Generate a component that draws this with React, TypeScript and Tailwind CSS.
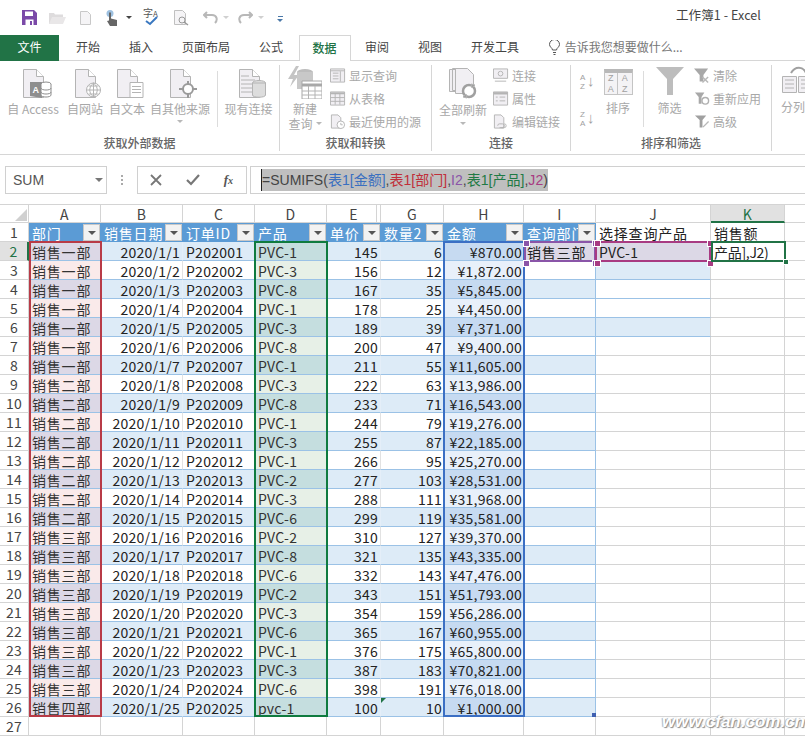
import React from "react";

const G = "#b4b4b4";
const L = "#f1eff3";

function Doc({ children }: { children?: React.ReactNode }) {
  return (
    <svg width={38} height={32} viewBox="0 0 38 32" className="overflow-visible">
      <g transform="translate(8 0)">
        <path d="M1.500 1.500h13l7 7v21h-20z" fill={L} stroke={G} />
        <path d="M14.500 1.500v7h7" fill="#fff" stroke={G} />
      </g>
      {children}
    </svg>
  );
}

function BigBtn({ w, label, icon, caret }: { w: number; label: React.ReactNode; icon: React.ReactNode; caret?: boolean }) {
  return (
    <div className="flex flex-col items-center shrink-0" style={{ width: w }}>
      <div className="h-[34px] flex items-end justify-center">{icon}</div>
      <div className="mt-[1px] text-[12px] leading-[16px] text-[#a8a8a8] whitespace-nowrap text-center">{label}</div>
      {caret && <div className="mt-[3px] w-0 h-0 border-x-[3px] border-x-transparent border-t-[3px] border-t-[#b8b8b8]" />}
    </div>
  );
}

function SmallBtn({ icon, label }: { icon: React.ReactNode; label: string }) {
  return (
    <div className="h-[23px] flex items-center gap-[3px] whitespace-nowrap text-[12px] text-[#a8a8a8]">
      <span className="w-[16px] h-[16px] flex items-center justify-center shrink-0">{icon}</span>
      {label}
    </div>
  );
}

function Group({ w, title, children }: { w: number; title?: string; children: React.ReactNode }) {
  return (
    <div className="shrink-0 h-[86px] mt-[4px] border-r border-[#d6d6d6] flex flex-col" style={{ width: w }}>
      <div className="h-[72px] flex pt-[1px]">{children}</div>
      <div className="text-center text-[12px] leading-[16px] text-[#666] font-medium">{title}</div>
    </div>
  );
}

const Sep = ({ cls = "" }: { cls?: string }) => (
  <div className={`w-[9px] shrink-0 flex justify-center ${cls}`}>
    <div className="w-px h-[56px] mt-[5px] bg-[#dcdcdc]" />
  </div>
);

const SmIcon = ({ children }: { children: React.ReactNode }) => (
  <svg width="17" height="17" viewBox="0 0 17 17" fill="none" stroke={G}>{children}</svg>
);

function Caret({ c = "#b8b8b8", w = 3 }: { c?: string; w?: number }) {
  return <div className="w-0 h-0 border-x-transparent" style={{ borderLeftWidth: w, borderRightWidth: w, borderTopWidth: w, borderTopColor: c }} />;
}

function Ribbon() {
  return (
    <div className="h-[94px] flex border-b border-[#d6d6d6] overflow-hidden shrink-0">
      <Group w={280} title="获取外部数据">
        <div className="w-[3px] shrink-0" />
        <BigBtn w={60} label="自 Access" icon={
          <Doc>
            <g transform="translate(8 0)">
              <path d="M8 14h12v16l-12-2z" fill="#8e8e8e" />
              <text x="10.500" y="25" fontSize="9" fontWeight="700" fill="#fff" fontFamily="Liberation Sans">A</text>
              <ellipse cx="24" cy="16" rx="5" ry="2" fill="#fff" stroke="#8e8e8e" />
              <path d="M19 16v11c0 2.700 10 2.700 10 0v-11M19 20c0 2.700 10 2.700 10 0M19 24c0 2.700 10 2.700 10 0" fill="#fff" stroke="#8e8e8e" />
            </g>
          </Doc>} />
        <BigBtn w={44} label="自网站" icon={
          <Doc>
            <g transform="translate(1.500 0)">
              <circle cx="26" cy="22" r="7" fill="#fff" stroke={G} />
              <path d="M19 22h14M26 15v14M21 18h10M21 26h10M26 15c-5 4-5 10 0 14M26 15c5 4 5 10 0 14" stroke={G} fill="none" />
            </g>
          </Doc>} />
        <BigBtn w={40} label="自文本" icon={
          <Doc>
            <g transform="translate(8 0)">
              <path d="M14 14.500h13v15h-13z" fill="#fff" stroke={G} />
              <path d="M16 18.500h9M16 21.500h9M16 24.500h9" stroke={G} />
            </g>
          </Doc>} />
        <BigBtn w={66} label="自其他来源" caret icon={
          <Doc>
            <g transform="translate(2 0)">
              <circle cx="25" cy="21" r="5" fill="#fff" stroke="#9a9a9a" strokeWidth="2" />
              <path d="M25 13v4M25 25v5M16 21h4M30 21h4" stroke="#9a9a9a" strokeWidth="2" />
            </g>
          </Doc>} />
        <Sep />
        <BigBtn w={53} label="现有连接" icon={
          <Doc>
            <path d="M11 8h8M11 12h14M11 16h14M11 20h14M11 24h14" stroke={G} />
            <g transform="translate(4 0)">
              <ellipse cx="25" cy="15" rx="6.500" ry="2.500" fill="#ddd" stroke={G} />
              <path d="M18.500 15v12c0 3 13 3 13 0v-12z" fill="#ddd" stroke={G} />
            </g>
          </Doc>} />
      </Group>

      <Group w={152} title="获取和转换">
        <div className="w-[2px] shrink-0" />
        <div className="w-[46px] shrink-0 flex flex-col items-center">
          <svg width="34" height="33" viewBox="0 0 34 33">
            <path d="M8 0l-8 13h5l-3 8 9-12H6l5-9z" fill="#c4c4c4" />
            <ellipse cx="17" cy="6" rx="8" ry="3" fill="#bdbdbd" />
            <path d="M9 6v17h16V6z" fill="#c8c8c8" />
            <path d="M14 15h20v18H14z" fill="#fff" stroke="#a8a8a8" />
            <path d="M14 19h20" stroke="#a8a8a8" strokeWidth="3" />
            <path d="M14 25h20M14 29h20M20.500 20v13M27 20v13" stroke={G} />
          </svg>
          <div className="mt-[2px] text-[12px] leading-[15px] text-[#a8a8a8] text-center">
            新建<br /><span className="inline-flex items-center gap-[3px]">查询<Caret /></span>
          </div>
        </div>
        <div className="ml-[2px] -mt-[2px] flex flex-col">
          <SmallBtn label="显示查询" icon={<SmIcon><path d="M.5 1.500h15v14H.5z" fill={L} /><path d="M.5 3.500h15M11 4v11" /><path d="M3 6h6M3 9h6M3 12h6" /></SmIcon>} />
          <SmallBtn label="从表格" icon={<SmIcon><path d="M.5 1.500h15v14H.5z" fill={L} /><path d="M.5 3h15" strokeWidth="2" /><path d="M.5 7.500h15M.5 11.500h15M5.500 3v12M10.500 3v12" /></SmIcon>} />
          <SmallBtn label="最近使用的源" icon={<SmIcon><path d="M1.500 1.500h7l3 3v11h-10z" fill={L} /><circle cx="11.500" cy="12" r="4" fill="#fff" /><path d="M11.500 10v2h2" /></SmIcon>} />
        </div>
      </Group>

      <Group w={139} title="连接">
        <div className="w-[7px] shrink-0" />
        <div className="w-[48px] shrink-0 flex flex-col items-center pt-[1px]">
          <svg width="32" height="33" viewBox="0 0 32 33" fill="none" stroke={G}>
            <path d="M2.500 2.500h10v22h-10zM5.500 1.500h10v22h-10z" fill={L} />
            <path d="M8.500 1.500h12l6 6v19h-18z" fill={L} />
            <circle cx="22" cy="24" r="6" stroke="#a0a0a0" strokeWidth="2.500" fill="#fff" />
            <path d="M24 17l4 1-3 3zM20 31l-4-1 3-3z" fill="#a0a0a0" />
          </svg>
          <div className="mt-[2px] text-[12px] leading-[15px] text-[#a8a8a8]">全部刷新</div>
          <div className="mt-[5px]"><Caret /></div>
        </div>
        <div className="ml-[6px] -mt-[2px] flex flex-col">
          <SmallBtn label="连接" icon={<SmIcon><path d="M.5 1.500h15v10H.5z" fill={L} /><circle cx="8" cy="6.500" r="2.500" /><path d="M2 14.500h12" /></SmIcon>} />
          <SmallBtn label="属性" icon={<SmIcon><path d="M.5 1.500h15v14H.5z" fill={L} /><path d="M.5 3h15" strokeWidth="2.500" /><path d="M3 7h2M3 11h2M7 7h6M7 11h6" /></SmIcon>} />
          <SmallBtn label="编辑链接" icon={<SmIcon><path d="M1.500 1.500h7l3 3v11h-10z" fill={L} /><path d="M5 13a2 2 0 0 1 2-2h3a2 2 0 0 1 0 4h-3M9 15h3a2 2 0 0 0 0-4" /></SmIcon>} />
        </div>
      </Group>

      <Group w={201} title="排序和筛选">
        <div className="w-[9px] shrink-0" />
        <div className="w-[14px] shrink-0 flex flex-col gap-[18px] pt-[7px] text-[#a0a0a0]">
          <div className="relative h-[19px] text-[8px] leading-[9px] font-['Liberation_Sans',sans-serif]">A<br />Z<span className="absolute left-[7px] -top-[1px] text-[15px] leading-[18px]">↓</span></div>
          <div className="relative h-[19px] text-[8px] leading-[9px] font-['Liberation_Sans',sans-serif]">Z<br />A<span className="absolute left-[7px] -top-[1px] text-[15px] leading-[18px]">↓</span></div>
        </div>
        <div className="w-[48px] shrink-0 flex flex-col items-center pt-[3px]">
          <div className="w-[29px] h-[26px] border border-[#c4c4c4] border-t-[4px] border-t-[#b8b8b8] grid grid-cols-2 bg-[#f4f3f5] text-[9px] leading-[11px] text-center text-[#a0a0a0] font-['Liberation_Sans',sans-serif]">
            <div className="border-r border-[#c4c4c4]">Z<br />A</div><div>A<br />Z</div>
          </div>
          <div className="mt-[5px] text-[12px] leading-[16px] text-[#a8a8a8]">排序</div>
        </div>
        <Sep cls="-ml-[3px]" />
        <div className="w-[43px] shrink-0 flex flex-col items-center pt-[1px]">
          <svg width="28" height="28" viewBox="0 0 28 28"><path d="M0 0h28L17 12v16h-6V12z" fill="#bdbdbd" /></svg>
          <div className="mt-[5px] text-[12px] leading-[16px] text-[#a8a8a8]">筛选</div>
        </div>
        <div className="ml-[3px] -mt-[2px] flex flex-col">
          <SmallBtn label="清除" icon={<svg width="17" height="17" viewBox="0 0 17 17"><path d="M0 1h15l-5 7v7H6V8z" fill="#a8a8a8" /><path d="M9 10l6 6M15 10l-6 6" stroke="#b8b8b8" strokeWidth="1.500" /></svg>} />
          <SmallBtn label="重新应用" icon={<svg width="17" height="17" viewBox="0 0 17 17"><path d="M1 2h10l-3 5v7H5V7z" fill="#a8a8a8" /><circle cx="12" cy="11" r="3.500" fill="none" stroke="#b0b0b0" strokeWidth="1.500" /></svg>} />
          <SmallBtn label="高级" icon={<svg width="17" height="17" viewBox="0 0 17 17"><path d="M1 2h12l-4 5v8H6V7z" fill="#a0a0a0" /><path d="M9 14l6-6 1 1-6 6z" fill="#b8b8b8" /></svg>} />
        </div>
      </Group>

      <div className="shrink-0 pl-[9px] pt-[4px] h-[70px]">
        <svg width="34" height="33" viewBox="0 0 34 33" fill="none" stroke={G}>
          <path d="M1.500 11.500h14v16h-14zM17.500 11.500h14v16h-14z" fill={L} />
          <path d="M4 15h9M4 19h9M4 23h9M20 15h9M20 19h9M20 23h9" />
          <path d="M10 8c4-7 12-7 15 0" strokeWidth="2" stroke="#a0a0a0" />
        </svg>
        <div className="mt-[1px] text-[12px] leading-[16px] text-[#a8a8a8] whitespace-nowrap">分列</div>
      </div>
    </div>
  );
}

function TitleBar() {
  return (
    <div className="h-[35px] flex items-center shrink-0 relative">
      <div className="ml-[22px] flex items-center">
        <svg width="15" height="15" viewBox="0 0 15 15"><path d="M0 0h12l3 3v12H0z" fill="#7b4aa8" /><path d="M3 1.500h8v4.500H3z" fill="#fff" /><path d="M3.500 9.500h8V15h-8z" fill="#fff" /><path d="M8 11h2v4H8z" fill="#7b4aa8" /></svg>
        <svg className="ml-[12px]" width="17" height="13" viewBox="0 0 17 13"><path d="M0 2h5l1 1.500h8V13H0z" fill="#dedcdd" /><path d="M3 6h14l-3 7H0z" fill="#e9e7e8" /></svg>
        <svg className="ml-[14px]" width="11" height="14" viewBox="0 0 11 14"><path d="M.5.500h7l3 3v10H.5z" fill="#f5f4f6" stroke="#c8c8c8" /></svg>
        <svg className="ml-[15px]" width="13" height="16" viewBox="0 0 13 16"><circle cx="4" cy="3.500" r="3.500" fill="#9dc0e0" /><path d="M3 2.500h2v6l6 1.500v6H4l-3-5 2-.500z" fill="#666" /></svg>
        <div className="ml-[7px]"><Caret c="#444" /></div>
        <div className="ml-[11px] w-[16px] h-[16px] relative">
          <span className="absolute left-0 -top-[3px] text-[10px] leading-[12px] text-[#555]">字<span className="text-[8px]">A</span></span>
          <svg className="absolute left-[2px] top-[6px]" width="13" height="10" viewBox="0 0 13 10"><path d="M1 5l4 3 7-7" fill="none" stroke="#3a78c0" strokeWidth="2" /></svg>
        </div>
        <svg className="ml-[15px]" width="15" height="16" viewBox="0 0 15 16" fill="none" stroke="#c0c0c0"><path d="M.5.500h8l3 3v11H.5z" fill="#f5f4f6" /><circle cx="8" cy="10" r="3" stroke="#999" /><path d="M10 12l4 3" stroke="#999" strokeWidth="1.500" /></svg>
        <svg className="ml-[14px]" width="15" height="13" viewBox="0 0 15 13" fill="none"><path d="M4 1L1 4l3 3" stroke="#b8b8b8" strokeWidth="2" /><path d="M1 4h8c5 0 6 5 3 8" stroke="#b8b8b8" strokeWidth="2" /></svg>
        <div className="ml-[5px]"><Caret c="#d0d0d0" /></div>
        <svg className="ml-[9px]" width="15" height="13" viewBox="0 0 15 13" fill="none"><path d="M11 1l3 3-3 3" stroke="#b8b8b8" strokeWidth="2" /><path d="M14 4H6c-5 0-6 5-3 8" stroke="#b8b8b8" strokeWidth="2" /></svg>
        <div className="ml-[5px]"><Caret c="#d0d0d0" /></div>
        <div className="ml-[13px] mt-[3px] flex flex-col items-center gap-[2px]">
          <div className="w-[5px] h-px bg-[#4a78a8]" />
          <Caret c="#4a78a8" />
        </div>
      </div>
      <div className="ml-auto mr-[44px] mb-[4px] text-[12.500px] tracking-[0.1px] text-[#444] whitespace-nowrap">工作簿1 - Excel</div>
    </div>
  );
}

function Tabs() {
  const tabs = ["开始", "插入", "页面布局", "公式", "数据", "审阅", "视图", "开发工具"];
  return (
    <div className="h-[26px] flex shrink-0 border-b border-[#d6d6d6] text-[12px] text-[#444]">
      <div className="w-[59px] h-[26px] pb-[2px] bg-[#217346] text-white flex items-center justify-center">文件</div>
      <div className="w-[2.500px]" />
      {tabs.map((t) =>
        t === "数据" ? (
          <div key={t} className="h-[26px] pb-[2px] px-[13px] ml-[1px] border border-b-0 border-[#d6d6d6] bg-white text-[#217346] font-medium flex items-center">{t}</div>
        ) : (
          <div key={t} className="px-[14.500px] h-[25px] pb-[1px] flex items-center">{t}</div>
        )
      )}
      <div className="ml-[15px] h-[25px] pb-[1px] flex items-center gap-[5px] text-[#767676]">
        <svg width="11" height="15" viewBox="0 0 11 15" fill="none" stroke="#555"><path d="M3.500 10c0-2-3-3-3-5.500a5 5 0 0 1 10 0C10.500 7 7.500 8 7.500 10z" /><path d="M4 12.500h3M4.500 14.500h2" /></svg>
        告诉我您想要做什么...
      </div>
    </div>
  );
}

function FormulaBar() {
  return (
    <div className="h-[49px] shrink-0 relative pt-[11px] flex items-start">
      <div className="ml-[5px] w-[102px] h-[28px] border border-[#d0d0d0] flex items-center pl-[7px] text-[14px] text-[#555] font-['Liberation_Sans',sans-serif]">
        SUM
        <div className="ml-auto mr-[3px]"><Caret c="#777" w={4} /></div>
      </div>
      <div className="w-[30px] h-[28px] flex flex-col items-center justify-center gap-[2px]">
        {[0, 1, 2].map((i) => <div key={i} className="w-[2px] h-[2px] bg-[#aaa]" />)}
      </div>
      <div className="w-[110px] h-[28px] border border-[#d0d0d0] flex items-center justify-between pl-[12px] pr-[13px]">
        <svg width="12" height="12" viewBox="0 0 12 12"><path d="M1 1l10 10M11 1L1 11" stroke="#777" strokeWidth="1.800" /></svg>
        <svg width="14" height="12" viewBox="0 0 14 12"><path d="M1 6l4 4 8-9" fill="none" stroke="#777" strokeWidth="2.200" /></svg>
        <span className="text-[13px] italic font-bold text-[#555] font-['Liberation_Serif',serif]">f<span className="text-[10px]">x</span></span>
      </div>
      <div className="ml-[3px] flex-1 h-[28px] border border-[#d0d0d0] border-r-0 flex items-center pl-[10px] text-[14px] font-['Liberation_Sans','Noto_Sans_CJK_SC',sans-serif] whitespace-nowrap">
        <div className="flex h-[22px] items-center bg-[#bfbfbf] border-l border-[#222] tracking-[0.02px]">
          <span className="text-[#444]">=SUMIFS(</span>
          <span className="text-[#3a6fc0]">表1[金额]</span>
          <span className="text-[#444]">,</span>
          <span className="text-[#c0303a]">表1[部门]</span>
          <span className="text-[#444]">,</span>
          <span className="text-[#8a55a8]">I2</span>
          <span className="text-[#444]">,</span>
          <span className="text-[#1f7a45]">表1[产品]</span>
          <span className="text-[#444]">,</span>
          <span className="text-[#a83b82]">J2</span>
          <span className="text-[#444]">)</span>
        </div>
      </div>
    </div>
  );
}

const COLS = "grid grid-cols-[29px_72px_82px_72px_72px_54px_63px_80px_72px_115px_74px_21px]";
const DEPT = (r: number) => (r <= 8 ? "销售一部" : r <= 16 ? "销售二部" : r <= 25 ? "销售三部" : "销售四部");
const PROD = [1, 3, 8, 1, 3, 8, 1, 3, 8, 1, 3, 1, 2, 3, 6, 2, 8, 6, 2, 3, 6, 1, 3, 6];
const QTY = [6, 12, 35, 25, 39, 47, 55, 63, 71, 79, 87, 95, 103, 111, 119, 127, 135, 143, 151, 159, 167, 175, 183, 191, 10];
const AMT = ["870.00", "1,872.00", "5,845.00", "4,450.00", "7,371.00", "9,400.00", "11,605.00", "13,986.00", "16,543.00", "19,276.00", "22,185.00", "25,270.00", "28,531.00", "31,968.00", "35,581.00", "39,370.00", "43,335.00", "47,476.00", "51,793.00", "56,286.00", "60,955.00", "65,800.00", "70,821.00", "76,018.00", "1,000.00"];

function Cell({ cls, right, children }: { cls: string; right?: boolean; children?: React.ReactNode }) {
  return (
    <div className={`h-[19px] leading-[20px] border-b whitespace-nowrap overflow-hidden ${right ? "text-right pr-[2px]" : "pl-[3px]"} ${cls}`}>
      {children}
    </div>
  );
}

function Filter() {
  return (
    <div className="absolute right-[1px] top-[1px] w-[17px] h-[17px] bg-[#f2f2f2] border border-[#c8c8c8] flex items-center justify-center">
      <Caret c="#555" w={4} />
    </div>
  );
}

function Sheet() {
  const letters = ["A", "B", "C", "D", "E", "G", "H", "I", "J", "K"];
  const heads = ["部门", "销售日期", "订单ID", "产品", "单价", "数量2", "金额", "查询部门"];
  const rows = Array.from({ length: 25 }, (_, i) => i + 2);
  const BL = "border-[#9bc2e6]";
  const GR = "border-[#d4d4d4]";
  const CJK = "tracking-[0.8px]";
  const rowHead = (r: number) => (
    <div className={`h-[19px] leading-[18px] text-center text-[14px] border-b border-r ${GR} ${r === 2 ? "bg-[#e1e1e1] text-[#217346] border-r-2 border-r-[#217346]" : "text-[#444]"}`}>{r}</div>
  );
  return (
    <div className="relative flex-1 text-[14px] text-[#222] tracking-[0.25px]">
      <div className={`${COLS} border-t ${GR} h-[19px]`}>
        <div className={`h-[18px] relative border-r border-b ${GR}`}>
          <div className="absolute right-[1px] bottom-[1px] w-0 h-0 border-l-[12px] border-l-transparent border-b-[12px] border-b-[#d0d0d0]" />
        </div>
        {letters.map((l) => (
          <div key={l} className={`h-[18px] leading-[18px] text-center text-[#444] border-r ${l === "E" ? "shadow-[inset_-3px_0_0_#fff,inset_-4px_0_0_#d4d4d4]" : ""} ${l === "K" ? "bg-[#e1e1e1] text-[#217346] border-b-2 border-b-[#217346]" : "border-b"} ${GR}`}>{l}</div>
        ))}
        <div className={`h-[18px] border-b ${GR}`} />
      </div>

      <div className={COLS}>
        <div className={`h-[19px] leading-[18px] text-center text-[#444] border-b border-r ${GR}`}>1</div>
        {heads.map((h) => (
          <div key={h} className={`relative h-[19px] leading-[20px] bg-[#5b9bd5] text-white pl-[3px] whitespace-nowrap overflow-hidden ${CJK}`}>
            {h}
            <Filter />
          </div>
        ))}
        <div className={`h-[19px] leading-[20px] pl-[3px] border-b border-r ${GR} ${CJK}`}>选择查询产品</div>
        <div className={`h-[19px] leading-[20px] pl-[3px] border-b border-r ${GR} ${CJK}`}>销售额</div>
        <div className={`h-[19px] border-b ${GR}`} />
      </div>

      {rows.map((r) => {
        const e = r % 2 === 0;
        const i = r - 2;
        const band = e ? "bg-[#ddebf7]" : "bg-white";
        const vline = e ? "border-r border-r-[#e4eef8]" : "border-r border-r-[#e2e2e2]";
        const jBlue = r === 3 || r === 6;
        const jBl = r >= 3 && r <= 6;
        return (
          <div key={r} className={COLS}>
            {rowHead(r)}
            <Cell cls={`${BL} ${e ? "bg-[#dcd8e6]" : "bg-[#faeaea]"} text-[#333] ${CJK}`}>{DEPT(r)}</Cell>
            <Cell right cls={`${BL} ${band} ${vline}`}>2020/1/{i + 1}</Cell>
            <Cell cls={`${BL} ${band} ${vline}`}>P2020{String(i + 1).padStart(2, "0")}</Cell>
            <Cell cls={`${BL} ${e ? "bg-[#c5dedf]" : "bg-[#e7f0e7]"} text-[#333]`}>{r === 26 ? "pvc-1" : `PVC-${PROD[i]}`}</Cell>
            <Cell right cls={`${BL} ${band} ${vline}`}>{r === 26 ? 100 : 145 + 11 * i}</Cell>
            <div className="relative">
              <Cell right cls={`${BL} ${band}`}>{QTY[i]}</Cell>
              {r === 26 && <div className="absolute left-0 top-0 w-0 h-0 border-r-[5px] border-r-transparent border-t-[5px] border-t-[#217346]" />}
            </div>
            <Cell right cls={`${BL} ${e ? "bg-[#c6daf1]" : "bg-[#e8f0fa]"}`}>¥{AMT[i]}</Cell>
            <div className="relative">
              <Cell cls={`${BL} border-r ${r === 2 ? `bg-[#dcd8e6] ${CJK}` : band}`}>{r === 2 ? "销售三部" : ""}</Cell>
              {r === 26 && <div className="absolute right-0 bottom-0 w-[4px] h-[4px] bg-[#3f5fb0]" />}
            </div>
            <Cell cls={`${r === 2 ? "bg-[#dcd8e6]" : jBlue ? "bg-[#ddebf7]" : "bg-white"} ${jBl ? BL : GR} border-r border-r-[#d4d4d4]`}>{r === 2 ? "PVC-1" : ""}</Cell>
            <Cell cls={`${GR} border-r`}>{r === 2 ? <span className="tracking-[-0.3px]">产品],J2)</span> : ""}</Cell>
            <div className={`h-[19px] border-b ${GR}`} />
          </div>
        );
      })}

      <div className={COLS}>
        {rowHead(27)}
        {Array.from({ length: 11 }, (_, k) => (
          <div key={k} className={`h-[19px] border-b ${k < 10 ? "border-r" : ""} ${GR}`} />
        ))}
      </div>

      {/* reference range outlines drawn over the cells */}
      <div className="absolute left-[29px] top-[37px] w-[73px] h-[476px] border-2 border-[#b83b47]" />
      <div className="absolute left-[254px] top-[37px] w-[74px] h-[476px] border-2 border-[#0f7b3f]" />
      <div className="absolute left-[443px] top-[37px] w-[82px] h-[476px] border-2 border-[#3b6fc4]" />
      <Outline x={524} w={72} c="#8a55a8" />
      <Outline x={595} w={116} c="#a83b82" />
      <div className="absolute left-[711px] top-[37px] w-[75px] h-[21px] border-2 border-[#217346]" />
      <div className="absolute left-[783px] top-[55px] w-[6px] h-[6px] bg-[#217346] border border-white" />
      <div className="absolute left-[662px] top-[506px] text-[17px] leading-[24px] italic font-bold text-white tracking-[0px] font-['Liberation_Sans',sans-serif] [text-shadow:1px_1px_1px_#8a8a8a,-1px_0_1px_#b0b0b0] whitespace-nowrap">www.cfan.com.cn</div>
    </div>
  );
}

function Outline({ x, w, c }: { x: number; w: number; c: string }) {
  const handles = [[-2, -2], [w - 5, -2], [-2, 18], [w - 5, 18]];
  return (
    <div className="absolute top-[37px] h-[21px] border-2" style={{ left: x, width: w, borderColor: c }}>
      {handles.map(([l, t], i) => (
        <div key={i} className="absolute w-[7px] h-[7px] border border-white" style={{ left: l - 1, top: t - 1, backgroundColor: c }} />
      ))}
    </div>
  );
}

export default function App() {
  return (
    <div className="w-[805px] h-[738px] overflow-hidden bg-white flex flex-col font-['Noto_Sans_CJK_SC',sans-serif]">
      <TitleBar />
      <Tabs />
      <Ribbon />
      <FormulaBar />
      <Sheet />
    </div>
  );
}
